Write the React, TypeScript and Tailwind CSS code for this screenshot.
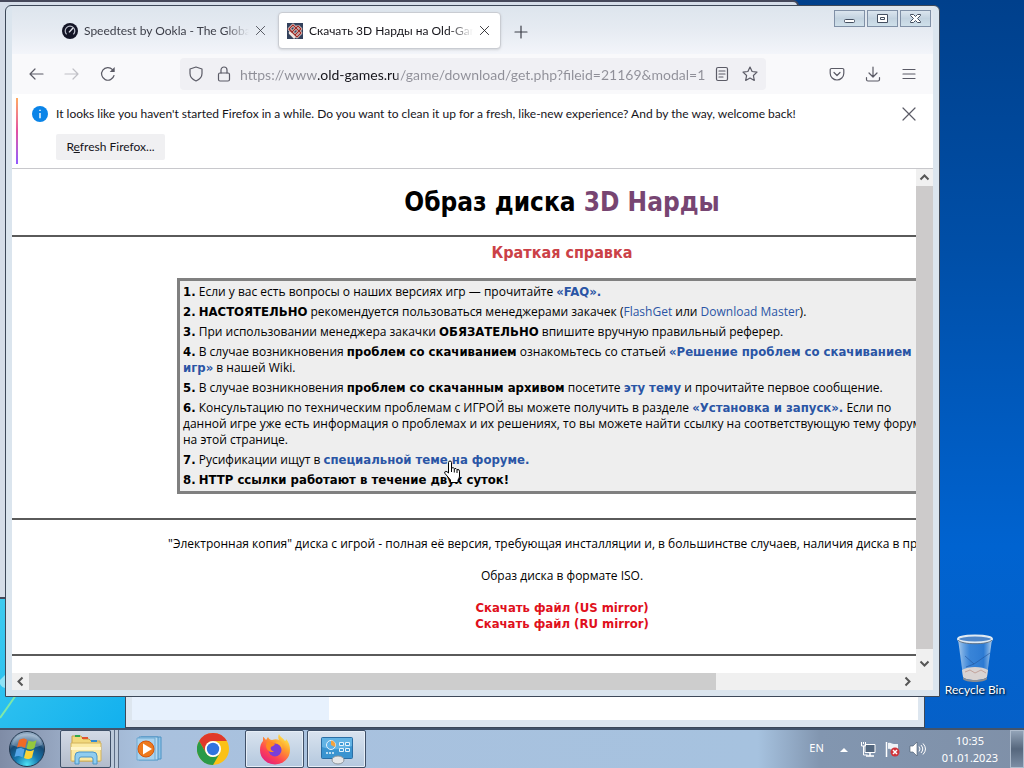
import type { ReactNode } from 'react'

const uiFont = "font-['Lato','Open_Sans',sans-serif]"
const trayFont = "font-['Noto_Sans',sans-serif]"
const pageFont = "font-['Open_Sans','Noto_Sans',sans-serif]"
const boldFont = "font-bold font-['DejaVu_Sans_Condensed','DejaVu_Sans',sans-serif]"

function Icon({ size = 16, children, className = '' }: { size?: number; children: ReactNode; className?: string }) {
  return (
    <svg
      width={size}
      height={size}
      viewBox="0 0 16 16"
      fill="none"
      stroke="currentColor"
      strokeWidth="1.2"
      strokeLinecap="round"
      strokeLinejoin="round"
      className={`shrink-0 ${className}`}
      aria-hidden="true"
    >
      {children}
    </svg>
  )
}

function CloseIcon({ size = 12 }: { size?: number }) {
  return (
    <Icon size={size}>
      <path d="M2 2l12 12M14 2L2 14" />
    </Icon>
  )
}

function Chevron({ d }: { d: string }) {
  return (
    <svg width="17" height="17" viewBox="0 0 17 17" fill="none" stroke="#555" strokeWidth="2" aria-hidden="true">
      <path d={d} />
    </svg>
  )
}

function SpeedtestIcon() {
  return (
    <svg width="16" height="16" viewBox="0 0 16 16" className="shrink-0" aria-hidden="true">
      <circle cx="8" cy="8" r="8" fill="#141526" />
      <path d="M4.6 11.4a4.8 4.8 0 1 1 6.8 0" fill="none" stroke="#b9bdc9" strokeWidth="1.2" />
      <path d="M7 9.4L11 5" stroke="#e5e7ee" strokeWidth="1.4" />
    </svg>
  )
}

function OldGamesIcon() {
  return (
    <svg width="16" height="16" viewBox="0 0 16 16" className="shrink-0" aria-hidden="true">
      <path fill="#33415c" d="M0 0h16v16H0z" />
      <g fill="none" strokeWidth="2.6" stroke="#efe4de" strokeLinejoin="round">
        <path d="M2 6l4-4 8 8-4 4z" />
        <path d="M2 6l3 3 6-6M5 9l-2 1 5 5M11 3l3 3-6 6" />
      </g>
      <g fill="none" strokeWidth="1.2" stroke="#9c2b28" strokeLinejoin="round">
        <path d="M2 6l4-4 8 8-4 4z" />
        <path d="M2 6l3 3 6-6M11 3l3 3-6 6" />
      </g>
    </svg>
  )
}

function CaptionButton({ label, children }: { label: string; children: ReactNode }) {
  return (
    <button
      aria-label={label}
      className="flex h-[17px] w-[31px] items-center justify-center border border-[#8090a6] bg-linear-to-b from-[#dbe5ee] via-[#c3d3e0] to-[#cfe0ea] text-[#444f60]"
    >
      <svg width="13" height="11" viewBox="0 0 13 11" fill="#fff" stroke="currentColor" aria-hidden="true">
        {children}
      </svg>
    </button>
  )
}

const tabLabel =
  'min-w-0 flex-1 overflow-hidden text-left whitespace-nowrap [mask-image:linear-gradient(to_right,#000_85%,transparent)]'

function TitleBar() {
  return (
    <div className="flex h-12 items-start bg-linear-to-b from-[#dde5ed] via-[#e6ebf2] to-[#f3f5fa]">
      <div className="mt-[6px] ml-[42px] flex h-[37px] w-[220px] items-center gap-1.5 px-2 text-[#3c3e48]">
        <SpeedtestIcon />
        <button className={tabLabel}>Speedtest by Ookla - The Global Broadband</button>
        <button aria-label="Close tab"><CloseIcon size={11} /></button>
      </div>
      <div className="mt-[6px] ml-1 flex h-[37px] w-[223px] items-center gap-1.5 rounded border border-[#c9ccd2] bg-white pr-2.5 pl-2 text-[#15141a] shadow-sm">
        <OldGamesIcon />
        <button className={tabLabel}>Скачать 3D Нарды на Old-Games.RU</button>
        <button aria-label="Close tab"><CloseIcon size={11} /></button>
      </div>
      <button aria-label="New tab" className="mt-[18px] ml-3 text-[#3c3e48]">
        <Icon size={16}>
          <path d="M8 2v12M2 8h12" />
        </Icon>
      </button>
      <div className="mt-1 mr-0.5 ml-auto flex gap-0.5">
        <CaptionButton label="Minimize">
          <rect x="1.5" y="6.5" width="10" height="3" rx="1" />
        </CaptionButton>
        <CaptionButton label="Restore">
          <path d="M1.5 1.5h10v8h-10z" />
          <path d="M4.500 4.500h4v2h-4z" />
        </CaptionButton>
        <CaptionButton label="Close">
          <path d="M1.500 1.500h3l2 2 2-2h3v1l-3 3 3 3v1h-3l-2-2-2 2h-3v-1l3-3-3-3z" />
        </CaptionButton>
      </div>
    </div>
  )
}

function NavBar() {
  return (
    <div className="flex h-10 items-center bg-[#f9f9fb] text-[#5b5b66]">
      <button aria-label="Back" className="ml-4">
        <Icon>
          <path d="M15 8H2M7 3L2 8l5 5" />
        </Icon>
      </button>
      <button aria-label="Forward" disabled className="ml-5 text-[#c0c0c6]">
        <Icon>
          <path d="M1 8h13M9 3l5 5-5 5" />
        </Icon>
      </button>
      <button aria-label="Reload" className="ml-5">
        <Icon>
          <path d="M14 9.500A6.300 6.300 0 1 1 12.500 3.600" />
          <path d="M14.700 1v5h-5z" fill="currentColor" stroke="none" />
        </Icon>
      </button>
      <div className="ml-16 flex h-8 w-[586px] items-center rounded bg-[#f0f0f4] px-2">
        <Icon>
          <path d="M8 1l6 2v4.500c0 3.500-2.500 6-6 7.500-3.500-1.500-6-4-6-7.500V3z" />
        </Icon>
        <Icon className="ml-3">
          <rect x="2.500" y="7" width="11" height="8" rx="1.500" />
          <path d="M5 7V4a3 3 0 0 1 6 0v3" />
        </Icon>
        <input
          aria-label="Address"
          defaultValue="https://www.old-games.ru/game/download/get.php?fileid=21169&modal=1"
          className="ml-2 h-6 min-w-0 flex-1 bg-[linear-gradient(to_right,#8f8f98_78px,#15141a_78px,#15141a_158px,#8f8f98_158px)] bg-clip-text text-sm text-transparent outline-none"
        />
        <button aria-label="Reader view" className="ml-2">
          <Icon>
            <rect x="2.500" y="1.500" width="11" height="13" rx="1.500" />
            <path d="M5 5h6M5 8h6M5 11h4" />
          </Icon>
        </button>
        <button aria-label="Bookmark this page" className="ml-3">
          <Icon>
            <path d="M8 1l2.100 4.500 4.900.6-3.600 3.400.9 4.900L8 12l-4.300 2.400.9-4.900L1 6.100l4.900-.6z" />
          </Icon>
        </button>
      </div>
      <div className="mr-4 ml-auto flex gap-5">
        <button aria-label="Save to Pocket">
          <Icon>
            <path d="M2.500 2.500h11a1.300 1.300 0 0 1 1.300 1.300v3.400a6.800 6.800 0 0 1-13.600 0V3.800a1.300 1.300 0 0 1 1.300-1.300z" />
            <path d="M5 6.500l3 3 3-3" />
          </Icon>
        </button>
        <button aria-label="Downloads">
          <Icon>
            <path d="M8 1v10M4 7l4 4 4-4M1.500 11.500v2a1.500 1.500 0 0 0 1.500 1.500h10a1.500 1.500 0 0 0 1.500-1.500v-2" />
          </Icon>
        </button>
        <button aria-label="Open application menu">
          <Icon>
            <path d="M2 3.500h12M2 8h12M2 12.500h12" />
          </Icon>
        </button>
      </div>
    </div>
  )
}

function InfoBar() {
  return (
    <div className="flex h-[75px] items-stretch border-b border-[#c8c8cc] bg-white pb-1 pl-1 text-[#15141a]">
      <div className="mt-1 w-0.5 bg-linear-to-b from-[#ffa95e] via-[#e34fa0] to-[#9059ff]" />
      <div className="flex flex-1 gap-2 pt-3 pl-3.5">
        <svg width="16" height="16" viewBox="0 0 15 15" className="shrink-0" aria-hidden="true">
          <circle cx="7.500" cy="7.500" r="7.500" fill="#0a84e8" />
          <path d="M7.500 3.500v1.300M7.500 6.500v5" stroke="#fff" strokeWidth="1.300" />
        </svg>
        <div>
          <p className="leading-4 whitespace-nowrap">
            It looks like you haven't started Firefox in a while. Do you want to clean it up for a fresh, like-new experience? And by the way, welcome back!
          </p>
          <button className="mt-3 h-[26px] w-[109px] rounded-xs bg-[#f0f0f2]">
            R<u>e</u>fresh Firefox...
          </button>
        </div>
        <button aria-label="Dismiss" className="mr-4 ml-auto self-start text-[#5b5b66]">
          <CloseIcon size={16} />
        </button>
      </div>
    </div>
  )
}

function Bold({ children }: { children: ReactNode }) {
  return <b className={`text-[13px] leading-none ${boldFont}`}>{children}</b>
}

function Link({ children }: { children: ReactNode }) {
  return (
    <a href="#" className="text-[#2a55a5]">
      {children}
    </a>
  )
}

const tips: ReactNode[] = [
  <>Если у вас есть вопросы о наших версиях игр — прочитайте <Bold><Link>«FAQ».</Link></Bold></>,
  <><Bold>НАСТОЯТЕЛЬНО</Bold> рекомендуется пользоваться менеджерами закачек (<Link>FlashGet</Link> или <Link>Download Master</Link>).</>,
  <>При использовании менеджера закачки <Bold>ОБЯЗАТЕЛЬНО</Bold> впишите вручную правильный реферер.</>,
  <>В случае возникновения <Bold>проблем со скачиванием</Bold> ознакомьтесь со статьей <Bold><Link>«Решение проблем со скачиванием<br />игр»</Link></Bold> в нашей Wiki.</>,
  <>В случае возникновения <Bold>проблем со скачанным архивом</Bold> посетите <Bold><Link>эту тему</Link></Bold> и прочитайте первое сообщение.</>,
  <>Консультацию по техническим проблемам с ИГРОЙ вы можете получить в разделе <Bold><Link>«Установка и запуск».</Link></Bold> Если по<br />данной игре уже есть информация о проблемах и их решениях, то вы можете найти ссылку на соответствующую тему форума<br />на этой странице.</>,
  <>Русификации ищут в <Bold><Link>специальной теме на форуме.</Link></Bold></>,
  <Bold>HTTP ссылки работают в течение двух суток!</Bold>,
]

function DownloadPage() {
  return (
    <main className={`w-[1100px] text-center text-xs leading-4 text-black ${pageFont}`}>
      <h1 className={`flex h-[66px] items-center justify-center text-[26px] ${boldFont}`}>
        <span>Образ диска <a href="#" className="text-[#774572]">3D Нарды</a></span>
      </h1>
      <hr className="border-t-2 border-[#5a5a5a]" />
      <h2 className={`mt-1.5 text-base leading-5 text-[#cb4147] ${boldFont}`}>Краткая справка</h2>
      <ol className="mx-auto mt-[15px] w-[770px] border-3 border-[#808080] bg-[#eee] px-[3px] py-px text-left whitespace-nowrap">
        {tips.map((tip, i) => (
          <li key={i} className="py-0.5">
            <Bold>{i + 1}.</Bold> {tip}
          </li>
        ))}
      </ol>
      <hr className="mt-6 border-t-2 border-[#5a5a5a]" />
      <p className="mt-4 whitespace-nowrap">
        "Электронная копия" диска с игрой - полная её версия, требующая инсталляции и, в большинстве случаев, наличия диска в приводе.
      </p>
      <p className="mt-4">Образ диска в формате ISO.</p>
      <p className="mt-4 text-[#e0101c]">
        <Bold>
          <a href="#">Скачать файл (US mirror)</a>
          <br />
          <a href="#">Скачать файл (RU mirror)</a>
        </Bold>
      </p>
      <hr className="mt-[22px] border-t-2 border-[#5a5a5a]" />
    </main>
  )
}

function BrowserWindow() {
  return (
    <section
      className={`absolute top-[5px] right-[84px] bottom-[31px] left-[5px] flex flex-col rounded-t-md border border-[#3d4858] bg-[#dbe5ee] px-1.5 pb-1.5 text-xs ${uiFont}`}
    >
      <TitleBar />
      <NavBar />
      <InfoBar />
      <div className="flex min-h-0 flex-1 bg-white">
        <div className="flex min-w-0 flex-1 flex-col">
          <div className="min-h-0 flex-1 overflow-hidden">
            <DownloadPage />
          </div>
          <div className="flex h-[17px] bg-[#f0f0f0]">
            <button aria-label="Scroll left"><Chevron d="M10.500 4.500l-4 4 4 4" /></button>
            <div className="w-[76%] bg-[#cdcdcd]" />
            <button aria-label="Scroll right" className="ml-auto"><Chevron d="M6.500 4.500l4 4-4 4" /></button>
          </div>
        </div>
        <div className="flex w-[17px] flex-col bg-[#f0f0f0] pb-[17px]">
          <button aria-label="Scroll up"><Chevron d="M4.500 10.500l4-4 4 4" /></button>
          <div className="flex-1 bg-[#cdcbcb]" />
          <button aria-label="Scroll down" className="mt-auto h-6 pt-1"><Chevron d="M4.500 6.500l4 4 4-4" /></button>
        </div>
      </div>
    </section>
  )
}

function RecycleBin() {
  return (
    <button className={`absolute right-3 bottom-[30px] flex w-[74px] flex-col items-center text-xs leading-4 text-white [text-shadow:1px_1px_2px_#000] ${uiFont}`}>
      <svg width="40" height="48" viewBox="0 0 40 48" aria-hidden="true">
        <defs>
          <linearGradient id="glass" x1="0" x2="1">
            <stop offset="0" stopColor="#b9d5f0" stopOpacity=".9" />
            <stop offset=".35" stopColor="#5c9be0" stopOpacity=".6" />
            <stop offset=".75" stopColor="#3e85d6" stopOpacity=".7" />
            <stop offset="1" stopColor="#c3dbf0" stopOpacity=".9" />
          </linearGradient>
        </defs>
        <path d="M3 5l5 37c1 5 22 5 24 0l5-37z" fill="url(#glass)" />
        <path d="M7 36l1 7c2 4 22 4 24 0l1-7c-6-4-20-4-26 0z" fill="#d9d3d2" />
        <path d="M8 43c2 4 22 4 24 0l0 2c-2 4-22 4-24 0z" fill="#8a8d92" />
        <path d="M10 38l5-2 5 3 6-3 5 3" fill="none" stroke="#b98f86" strokeWidth="1" opacity=".7" />
        <path d="M10 22l9 8 16-11M19 30l-8 3" fill="none" stroke="#23549a" strokeWidth="1" opacity=".6" />
        <ellipse cx="20" cy="5" rx="17" ry="3.500" fill="#4f86c8" stroke="#dfe9f2" strokeWidth="2" />
        <path d="M3 6c3 5 31 5 34 0" fill="none" stroke="#5f7389" strokeWidth="1" />
      </svg>
      <span className="whitespace-nowrap">Recycle Bin</span>
    </button>
  )
}

function StartOrb() {
  return (
    <svg width="38" height="38" viewBox="0 0 38 38" aria-hidden="true">
      <defs>
        <radialGradient id="orb" cx=".5" cy=".95" r=".85">
          <stop offset="0" stopColor="#4fe3f5" />
          <stop offset=".4" stopColor="#1678ae" />
          <stop offset=".75" stopColor="#174a74" />
          <stop offset="1" stopColor="#8fa9c2" />
        </radialGradient>
      </defs>
      <circle cx="19" cy="19" r="17.500" fill="url(#orb)" stroke="#23384f" />
      <path d="M4 15c2-15 28-15 30 0-8 4-22 4-30 0z" fill="#c8d7e6" opacity=".35" />
      <path d="M11 10c3-2 6-2 8 0l-2 8c-3-2-5-2-8-.5z" fill="#ef6a26" />
      <path d="M20.500 10.500c3 1.500 5 1.500 8-.5l-2 8c-3 2-5 2-8 .5z" fill="#94c83d" />
      <path d="M8.500 19c3-1.500 5-1.500 8 .5l-2 8c-3-2-5-2-8-.5z" fill="#55a6e8" />
      <path d="M18 20c3 1.500 5 1.500 8-.5l-2 8c-3 2-5 2-8 .5z" fill="#fbd336" />
    </svg>
  )
}

function ExplorerIcon() {
  return (
    <svg width="34" height="32" viewBox="0 0 34 32" aria-hidden="true">
      <path d="M3 3h9l2 3h6l2 2h9v20H3z" fill="#f1d87c" stroke="#c5a24a" />
      <path d="M6 3h5" stroke="#2fa84a" strokeWidth="2" />
      <path d="M13 5h6" stroke="#e0522f" strokeWidth="2" />
      <path d="M22 8h6" stroke="#3189cf" strokeWidth="2" />
      <path d="M2 10h30v18H2z" fill="#fbeaa4" stroke="#d2b25d" />
      <path d="M2 14h30v3H2z" fill="#fff5c9" />
      <path d="M6 31v-8q0-4 4-4h14q4 0 4 4v8h-4v-5q0-2-2-2H12q-2 0-2 2v5z" fill="#8fcdf0" stroke="#4b94c6" />
    </svg>
  )
}

function MediaPlayerIcon() {
  return (
    <svg width="28" height="28" viewBox="0 0 28 28" aria-hidden="true">
      <path d="M6 2h20v22H6z" fill="#8fc3e6" stroke="#4c93c4" />
      <path d="M4 2h19v23H4z" fill="#b7daf0" stroke="#4c93c4" />
      <path d="M2 3h18v22H2z" fill="#a8d2ee" stroke="#6fa9d2" />
      <circle cx="11" cy="14" r="8" fill="#ee7a1d" stroke="#d4570f" />
      <path d="M8 8.500l9 5.500-9 5.500z" fill="#fff" />
    </svg>
  )
}

function ChromeIcon() {
  return (
    <svg width="32" height="32" viewBox="0 0 32 32" aria-hidden="true">
      <circle cx="16" cy="16" r="16" fill="#fbc116" />
      <path d="M2.140 8A16 16 0 0 1 29.860 8H16a8 8 0 0 0-6.900 12z" fill="#e0392b" />
      <path d="M2.140 8L9.100 20a8 8 0 0 0 13.800 0L16 32A16 16 0 0 1 2.140 8z" fill="#2a9a48" />
      <circle cx="16" cy="16" r="8" fill="#fff" />
      <circle cx="16" cy="16" r="6.200" fill="#3274e0" />
    </svg>
  )
}

function FirefoxIcon() {
  return (
    <svg width="32" height="32" viewBox="0 0 32 32" aria-hidden="true">
      <defs>
        <linearGradient id="fox" x1=".85" y1=".05" x2=".2" y2=".95">
          <stop offset="0" stopColor="#fff04a" />
          <stop offset=".35" stopColor="#ff9a2e" />
          <stop offset=".7" stopColor="#ff4353" />
          <stop offset="1" stopColor="#e2207e" />
        </linearGradient>
      </defs>
      <path
        d="M20 1c1 3 4 4 6 7 1-.5 1-1 1-2 3 3 4 7 4 11a15 14.500 0 0 1-30 0c0-4 1-7 3-9V4c1 0 2 2 3 3l2-3c1 2 2 3 4 3 3-1 5-1 7 0-1-2-1-4 0-6z"
        fill="url(#fox)"
      />
      <circle cx="16" cy="17" r="6.500" fill="#7a3fd8" />
      <path d="M8 9c3-1 6 0 8 2-1 2-3 2-4 3-1 2 0 4 3 4.500-4 2-8-2-8-6z" fill="#ff8a22" />
      <path d="M16 10c4 0 7 3 7 7 1-3 0-7-2-9z" fill="#ffb52e" />
    </svg>
  )
}

function ControlPanelIcon() {
  return (
    <svg width="34" height="32" viewBox="0 0 34 32" aria-hidden="true">
      <rect x="1.500" y="4.500" width="31" height="21" rx="1" fill="#3a94d0" stroke="#2a6ea5" />
      <path d="M2 5h30v8C22 17 12 17 2 14z" fill="#62b3e4" />
      <circle cx="11" cy="12" r="4.500" fill="#5bb0e8" stroke="#e4f2fb" />
      <path d="M11 12V7.500A4.500 4.500 0 0 1 15 14z" fill="#f4a340" />
      <path d="M19.500 9.500h4v3h-4zM25.500 9.500h4v3h-4zM19.500 15.500h4v3h-4zM25.500 15.500h4v3h-4z" fill="#3f9bd8" stroke="#e4f2fb" />
      <path d="M6 20h2M9 20h2M12 20h2" stroke="#e4f2fb" strokeWidth="1.500" />
      <ellipse cx="18" cy="27" rx="6" ry="4" fill="#e6e7e8" stroke="#8c9399" />
    </svg>
  )
}

function TaskButton({ label, children }: { label: string; children: ReactNode }) {
  return (
    <button
      aria-label={label}
      className="flex h-[38px] w-[59px] items-center justify-center rounded-xs border border-[#3f5068] bg-linear-to-b from-[#d9e3ef] to-[#b4c8de] shadow-[inset_0_0_0_1px_#e6eef7]"
    >
      {children}
    </button>
  )
}

function Tray() {
  return (
    <div className={`ml-auto flex h-full items-center text-[11px] leading-[17px] text-white ${trayFont}`}>
      <button className="mb-1">EN</button>
      <button aria-label="Show hidden icons" className="ml-4">
        <svg width="8" height="5" viewBox="0 0 8 5" aria-hidden="true"><path d="M0 5l4-4 4 4z" fill="#fff" /></svg>
      </button>
      <svg width="16" height="16" viewBox="0 0 16 16" fill="none" stroke="#fff" className="ml-3" aria-hidden="true">
        <path d="M5 3.500h10v8H5z" fill="#53677f" />
        <path d="M10 12v3M6 15h8" strokeWidth="1.500" />
        <path d="M1.500 1v4h4V1M3.500 5v9h4M3.500 1v2" />
      </svg>
      <svg width="17" height="16" viewBox="0 0 17 16" className="ml-2" aria-hidden="true">
        <path d="M2.500 1v15" stroke="#fff" strokeWidth="1.500" />
        <path d="M4 2c3-1 4 1 6 1h4v6H9C7 9 6 7 4 8z" fill="#eef2f6" />
        <circle cx="11" cy="11" r="4.500" fill="#d0343a" />
        <path d="M9 9l4 4M13 9l-4 4" stroke="#fff" strokeWidth="1.500" />
      </svg>
      <svg width="17" height="16" viewBox="0 0 17 16" className="ml-2" fill="none" stroke="#fff" aria-hidden="true">
        <path d="M1 5h3l4-4v14l-4-4H1z" fill="#fff" stroke="#47576c" strokeWidth=".6" />
        <path d="M10 5.500q2 2.500 0 5M12 4q3.500 4 0 8M14 2.500q5 5.500 0 11" />
      </svg>
      <time className="ml-4 text-center">
        10:35
        <br />
        01.01.2023
      </time>
      <button aria-label="Show desktop" className="ml-3 h-full w-3.5 border border-[#aebccd] bg-linear-to-b from-[#93a4b8] via-[#56677d] to-[#7b8da4]" />
    </div>
  )
}

function Taskbar() {
  return (
    <footer className="flex h-10 shrink-0 items-center border-t-2 border-[#43546b] bg-[linear-gradient(to_right,#7f8ca6,#98a9c3_6%,#a9c1de_14%,#a6c2df_74%,#8296b0_80%,#7f90a8)]">
      <button aria-label="Start" className="ml-2"><StartOrb /></button>
      <button
        aria-label="Windows Explorer"
        className="ml-3.5 flex h-[38px] w-[51px] items-center justify-center rounded-xs border border-[#3f5068] bg-linear-to-b from-[#d3dae6] to-[#b3bccb]"
      >
        <ExplorerIcon />
      </button>
      <div className="h-[38px] w-1 border-r border-[#5c6d86] bg-[#bccadb]" />
      <div className="h-[38px] w-1 border-r border-[#5c6d86] bg-[#bccadb]" />
      <button aria-label="Windows Media Player" className="ml-4"><MediaPlayerIcon /></button>
      <button aria-label="Google Chrome" className="ml-[34px]"><ChromeIcon /></button>
      <div className="ml-4 flex gap-[3px]">
        <TaskButton label="Firefox"><FirefoxIcon /></TaskButton>
        <TaskButton label="Control Panel"><ControlPanelIcon /></TaskButton>
      </div>
      <Tray />
    </footer>
  )
}

function Cursor() {
  return (
    <svg width="18" height="24" viewBox="0 0 18 24" className="pointer-events-none absolute top-[460px] left-[443px]" aria-hidden="true">
      <path
        d="M5.500 13V2.500q0-1.500 1.500-1.500t1.500 1.500V8q2-1 2.800.700 2-.8 2.600.900 2.600-.7 2.600 1.600V16q0 2-1.500 4v2.500H7.500V20L2 13.500q-1-2 .8-2.200 1 0 2.700 1.700z"
        fill="#fff"
        stroke="#000"
      />
      <path d="M8.500 8v4M11.300 9v3.500M14 10v3" stroke="#000" />
    </svg>
  )
}

export default function App() {
  return (
    <div className="flex h-screen flex-col overflow-hidden">
      <div className="relative min-h-0 flex-1 overflow-hidden bg-[linear-gradient(to_bottom,#00408c,#004fa8_35%,#0063d0_75%,#0560c8)]">
        <svg className="absolute bottom-0 left-0" width="126" height="130" viewBox="0 0 126 130" aria-hidden="true">
          <defs>
            <linearGradient id="sky" x2="1" y2="1">
              <stop offset="0" stopColor="#3ecbf0" />
              <stop offset="1" stopColor="#12b0ee" />
            </linearGradient>
          </defs>
          <path d="M0 0h126v130H0z" fill="url(#sky)" />
          <path d="M0 120q10-14 18-26" stroke="#7fe8a8" strokeWidth="2" fill="none" />
          <path d="M0 82q4-4 6-6v14q-4 0-6-4z" fill="#8fe2f6" />
        </svg>
        <div className="absolute top-0 right-[225px] bottom-[129px] -left-1 rounded-tr-md border-2 border-[#45485a] bg-[#d5dde8]" />
        <div className="absolute top-20 right-[99px] bottom-0 left-[125px] flex border border-[#3d4858] bg-[#dde6ef] px-1.5 pb-[7px]">
          <div className="w-1/4 bg-[#e7f1fd]" />
          <div className="flex-1 bg-white" />
        </div>
        <RecycleBin />
        <BrowserWindow />
        <Cursor />
      </div>
      <Taskbar />
    </div>
  )
}
